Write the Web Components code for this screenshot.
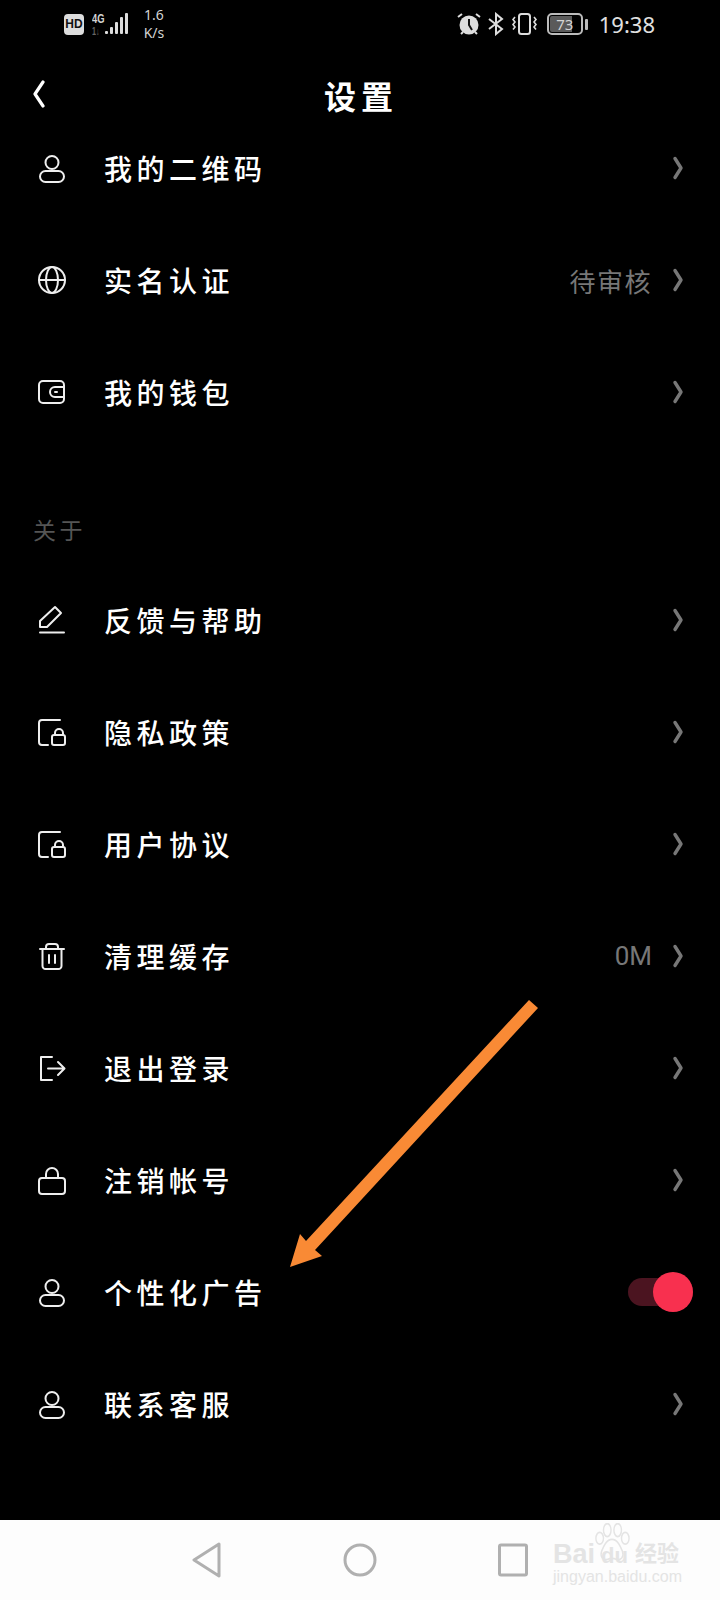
<!DOCTYPE html>
<html lang="zh">
<head>
<meta charset="utf-8">
<title>设置</title>
<style>
  html, body { margin: 0; background: #000; }
  body { font-family: "Noto Sans CJK SC", "Noto Sans", sans-serif; }
</style>
</head>
<body>
<phone-screen>
  <status-bar></status-bar>
  <nav-header>设置</nav-header>
  <settings-list>
    <setting-row icon="person">我的二维码</setting-row>
    <setting-row icon="globe" value="待审核">实名认证</setting-row>
    <setting-row icon="wallet">我的钱包</setting-row>
    <section-title>关于</section-title>
    <setting-row icon="pencil">反馈与帮助</setting-row>
    <setting-row icon="doclock">隐私政策</setting-row>
    <setting-row icon="doclock">用户协议</setting-row>
    <setting-row icon="trash" value="0M">清理缓存</setting-row>
    <setting-row icon="exit">退出登录</setting-row>
    <setting-row icon="lock">注销帐号</setting-row>
    <setting-row icon="person" toggle>个性化广告</setting-row>
    <setting-row icon="person">联系客服</setting-row>
  </settings-list>
  <system-nav></system-nav>
  <arrow-note></arrow-note>
</phone-screen>

<script>
const ICONS = {
  person: '<circle cx="15" cy="9.5" r="6.5"/><rect x="3" y="18" width="24" height="11" rx="5.5"/>',
  globe: '<circle cx="15" cy="15" r="13"/><ellipse cx="15" cy="15" rx="6" ry="13"/><path d="M2 15h26"/>',
  wallet: '<rect x="2" y="4" width="25" height="22" rx="4"/><path d="M27 10h-9a4.5 4.5 0 0 0 0 10h9"/><path d="M18 15h2"/>',
  pencil: '<path d="M3 22v-6L18 2l6 6-14 14z"/><path d="M3 27.5h24"/>',
  doclock: '<path d="M23 3H5a3 3 0 0 0-3 3v19a3 3 0 0 0 3 3h6"/><rect x="15" y="18" width="13" height="10" rx="2"/><path d="M18 18v-2a4 4 0 0 1 8 0v2"/>',
  trash: '<path d="M3 8h24"/><path d="M9 8V6a3 3 0 0 1 3-3h6a3 3 0 0 1 3 3v2"/><path d="M5.500 8v17a3 3 0 0 0 3 3h13a3 3 0 0 0 3-3V8"/><path d="M12 14v8M18 14v8"/>',
  exit: '<path d="M15 4H4v23h11"/><path d="M11 15.500h16M21 9l6.500 6.500L21 22"/>',
  lock: '<rect x="2" y="13" width="26" height="16" rx="3"/><path d="M9 13V9a6 6 0 0 1 12 0v4"/>'
};

class PhoneScreen extends HTMLElement {
  constructor() {
    super();
    this.attachShadow({ mode: 'open' });
    this.shadowRoot.innerHTML = `
      <style>
        :host {
          display: flex;
          flex-direction: column;
          position: relative;
          width: 720px;
          height: 1600px;
          overflow: hidden;
          background: #000;
          color: #fff;
        }
      </style>
      <slot></slot>
    `;
  }
}

class StatusBar extends HTMLElement {
  constructor() {
    super();
    this.attachShadow({ mode: 'open' });
    this.shadowRoot.innerHTML = `
      <style>
        :host {
          display: flex;
          align-items: flex-start;
          height: 48px;
          padding: 0 65px 0 64px;
          font-family: "Noto Sans", sans-serif;
          color: #d4d4d4;
        }
        .hd {
          width: 20px;
          height: 21px;
          margin-top: 14px;
          border-radius: 4px;
          background: #ddd;
          color: #111;
          font: 700 12px/21px "Liberation Sans", sans-serif;
          text-align: center;
        }
        .net { margin: 13px 0 0 8px; width: 12px; }
        .net div { font: 700 13px/12px "Liberation Sans", sans-serif; transform: scaleX(.72); transform-origin: left; white-space: nowrap; }
        .net .sub { margin-top: 2px; color: #666; font-size: 10px; line-height: 9px; }
        .bars { margin: 12px 0 0 1px; }
        .speed { margin: 6px 0 0 14px; width: 24px; font-size: 14px; line-height: 18px; text-align: center; }
        .right { display: flex; align-items: center; margin-left: auto; height: 48px; }
        .batt {
          position: relative;
          box-sizing: border-box;
          width: 36px;
          height: 22px;
          margin-left: 9px;
          border: 2px solid #bbb;
          border-radius: 5px;
          font-size: 15px;
          line-height: 18px;
          text-align: center;
          background: linear-gradient(90deg, #5a5a5a 72%, transparent 72%);
          background-clip: content-box;
          padding: 1px;
        }
        .batt span { display: block; margin-top: -1px; }
        .cap { width: 3px; height: 11px; margin-left: 2px; border-radius: 1px; background: #bbb; }
        .time { margin-left: 11px; font-size: 22px; line-height: 48px; color: #e0e0e0; }
      </style>
      <div class="hd">HD</div>
      <div class="net"><div>4G</div><div class="sub">1↓</div></div>
      <svg class="bars" width="23" height="24" viewBox="0 0 23 24" fill="#ddd">
        <rect x="0" y="19" width="3" height="3" rx="1"/>
        <rect x="5" y="15" width="3" height="7" rx="1"/>
        <rect x="10" y="10" width="3" height="12" rx="1"/>
        <rect x="15" y="5" width="3" height="17" rx="1"/>
        <rect x="20" y="1" width="3" height="21" rx="1"/>
      </svg>
      <div class="speed">1.6<br>K/s</div>
      <div class="right">
        <svg width="24" height="24" viewBox="0 0 24 24">
          <circle cx="12" cy="13" r="9.500" fill="#ddd"/>
          <path d="M12 7v6l3 5" fill="none" stroke="#111" stroke-width="2"/>
          <path d="M1 5l4-3M23 5l-4-3M4 22l2-2M20 22l-2-2" stroke="#ddd" stroke-width="2" fill="none"/>
        </svg>
        <svg style="margin-left:7px" width="16" height="24" viewBox="0 0 16 24" fill="none" stroke="#ddd" stroke-width="2">
          <path d="M1 7l13 10-6 5V2l6 5L1 17"/>
        </svg>
        <svg style="margin-left:7px" width="27" height="24" viewBox="0 0 27 24" fill="none" stroke="#ddd" stroke-width="1.600">
          <rect x="8" y="2" width="11" height="20" rx="2.500" stroke-width="2"/>
          <path d="M4 5l-2 2.500 2 2.500-2 2.500 2 2.500-2 2.500M23 5l2 2.500-2 2.500 2 2.500-2 2.500 2 2.500"/>
        </svg>
        <div class="batt"><span>73</span></div>
        <div class="cap"></div>
        <div class="time">19:38</div>
      </div>
    `;
  }
}

class NavHeader extends HTMLElement {
  constructor() {
    super();
    this.attachShadow({ mode: 'open' });
    this.shadowRoot.innerHTML = `
      <style>
        :host {
          display: flex;
          align-items: center;
          justify-content: center;
          position: relative;
          box-sizing: border-box;
          height: 64px;
          padding: 30px 0 0 2px;
          font-size: 32px;
          font-weight: 700;
          letter-spacing: 5px;
        }
        svg { position: absolute; left: 32px; top: 32px; }
      </style>
      <svg width="14" height="28" viewBox="0 0 14 28" fill="none" stroke="#fff" stroke-width="3.200" stroke-linecap="round" stroke-linejoin="round">
        <path d="M11 2L3 14l8 12"/>
      </svg>
      <slot></slot>
    `;
  }
}

class SettingsList extends HTMLElement {
  constructor() {
    super();
    this.attachShadow({ mode: 'open' });
    this.shadowRoot.innerHTML = `
      <style>
        :host { display: flex; flex-direction: column; flex: 1; }
      </style>
      <slot></slot>
    `;
  }
}

class SectionTitle extends HTMLElement {
  constructor() {
    super();
    this.attachShadow({ mode: 'open' });
    this.shadowRoot.innerHTML = `
      <style>
        :host {
          display: block;
          box-sizing: border-box;
          height: 116px;
          padding: 65px 0 0 33px;
          font-size: 23px;
          line-height: 32px;
          letter-spacing: 3.500px;
          color: #555;
        }
      </style>
      <slot></slot>
    `;
  }
}

class SettingRow extends HTMLElement {
  constructor() {
    super();
    this.attachShadow({ mode: 'open' });
    let value = this.getAttribute('value');
    let latin = value && /^[\w]+$/.test(value);
    let end = this.hasAttribute('toggle')
      ? '<span class="toggle"><i></i></span>'
      : `${value ? `<span class="value${latin ? ' latin' : ''}">${value}</span>` : ''}
         <svg class="chev" width="12" height="24" viewBox="0 0 12 24" fill="none" stroke="#777" stroke-width="3.400" stroke-linecap="round" stroke-linejoin="round"><path d="M3 2.500l6 9.500-6 9.500"/></svg>`;
    this.shadowRoot.innerHTML = `
      <style>
        :host {
          display: flex;
          align-items: center;
          box-sizing: border-box;
          height: 112px;
          padding: 0 37px;
        }
        svg.ico { flex: none; width: 30px; height: 30px; }
        .label {
          flex: 1;
          margin-left: 37px;
          font-size: 28px;
          font-weight: 500;
          letter-spacing: 4.500px;
          color: #fff;
        }
        .value { margin-right: 20px; font-size: 26px; letter-spacing: 1.500px; color: #777; }
        .value.latin { margin-right: 20px; font-family: Roboto, sans-serif; font-size: 26px; letter-spacing: 0; }
        .chev { flex: none; margin-right: -1px; }
        .toggle {
          position: relative;
          width: 65px;
          height: 28px;
          margin-right: -10px;
          border-radius: 14px;
          background: #4b1420;
        }
        .toggle i {
          position: absolute;
          right: 0;
          top: -6px;
          width: 40px;
          height: 40px;
          border-radius: 50%;
          background: #f8304f;
        }
      </style>
      <svg class="ico" viewBox="0 0 30 30" fill="none" stroke="#eee" stroke-width="2" stroke-linecap="round" stroke-linejoin="round">${ICONS[this.getAttribute('icon')]}</svg>
      <span class="label"><slot></slot></span>
      ${end}
    `;
  }
}

class SystemNav extends HTMLElement {
  constructor() {
    super();
    this.attachShadow({ mode: 'open' });
    this.shadowRoot.innerHTML = `
      <style>
        :host {
          display: block;
          position: relative;
          flex: none;
          height: 80px;
          background: #fdfdfd;
        }
        .keys {
          display: flex;
          justify-content: space-between;
          align-items: center;
          height: 80px;
          padding: 0 192px;
        }
        .mark {
          position: absolute;
          left: 553px;
          top: 3px;
          width: 130px;
          color: #e4e4e4;
          font-family: "Liberation Sans", sans-serif;
        }
        .brand { display: flex; align-items: baseline; box-sizing: border-box; height: 42px; padding-top: 20px; font-size: 27px; line-height: 20px; font-weight: 700; white-space: nowrap; }
        .du { margin-left: 6px; font-size: 22px; }
        .jy { position: relative; top: -2px; margin-left: 7px; font-family: "Noto Sans CJK SC", sans-serif; font-size: 22px; }
        .url { margin-top: 5px; font-size: 16px; line-height: 14px; white-space: nowrap; }
        .paw { position: absolute; left: 41px; top: 0; }
      </style>
      <div class="keys">
        <svg width="30" height="36" viewBox="0 0 30 36" fill="none" stroke="#b0b0b0" stroke-width="3" stroke-linejoin="round"><path d="M27 2L2 18l25 16z"/></svg>
        <svg width="34" height="36" viewBox="0 0 34 36" fill="none" stroke="#b0b0b0" stroke-width="3"><circle cx="17" cy="18" r="15"/></svg>
        <svg width="30" height="34" viewBox="0 0 30 34" fill="none" stroke="#b0b0b0" stroke-width="3" stroke-linejoin="round"><rect x="1.500" y="2" width="27" height="30" rx="1.500"/></svg>
      </div>
      <div class="mark">
        <svg class="paw" width="36" height="40" viewBox="0 0 38 34" preserveAspectRatio="none" fill="none" stroke="#e4e4e4" stroke-width="1.500">
          <ellipse cx="6" cy="13" rx="4" ry="5"/><ellipse cx="14" cy="6" rx="4" ry="5.500"/><ellipse cx="25" cy="6" rx="4" ry="5.500"/><ellipse cx="33" cy="13" rx="4" ry="5"/>
          <path d="M19 14c-6 0-9 6-11 10-2 5 2 8 6 7 3-1 7-1 10 0 4 1 8-2 6-7-2-4-5-10-11-10z"/>
        </svg>
        <div class="brand"><span>Bai</span><span class="du">du</span><span class="jy">经验</span></div>
        <div class="url">jingyan.baidu.com</div>
      </div>
    `;
  }
}

class ArrowNote extends HTMLElement {
  constructor() {
    super();
    this.attachShadow({ mode: 'open' });
    this.shadowRoot.innerHTML = `
      <style>
        :host { position: absolute; inset: 0; pointer-events: none; }
        svg { display: block; }
      </style>
      <svg width="720" height="1600" viewBox="0 0 720 1600">
        <polygon fill="#f98a35" points="529,1000 538,1008 315,1250 322,1256 290,1267 300,1234 306,1241"/>
      </svg>
    `;
  }
}

customElements.define('phone-screen', PhoneScreen);
customElements.define('status-bar', StatusBar);
customElements.define('nav-header', NavHeader);
customElements.define('settings-list', SettingsList);
customElements.define('section-title', SectionTitle);
customElements.define('setting-row', SettingRow);
customElements.define('system-nav', SystemNav);
customElements.define('arrow-note', ArrowNote);
</script>
</body>
</html>
